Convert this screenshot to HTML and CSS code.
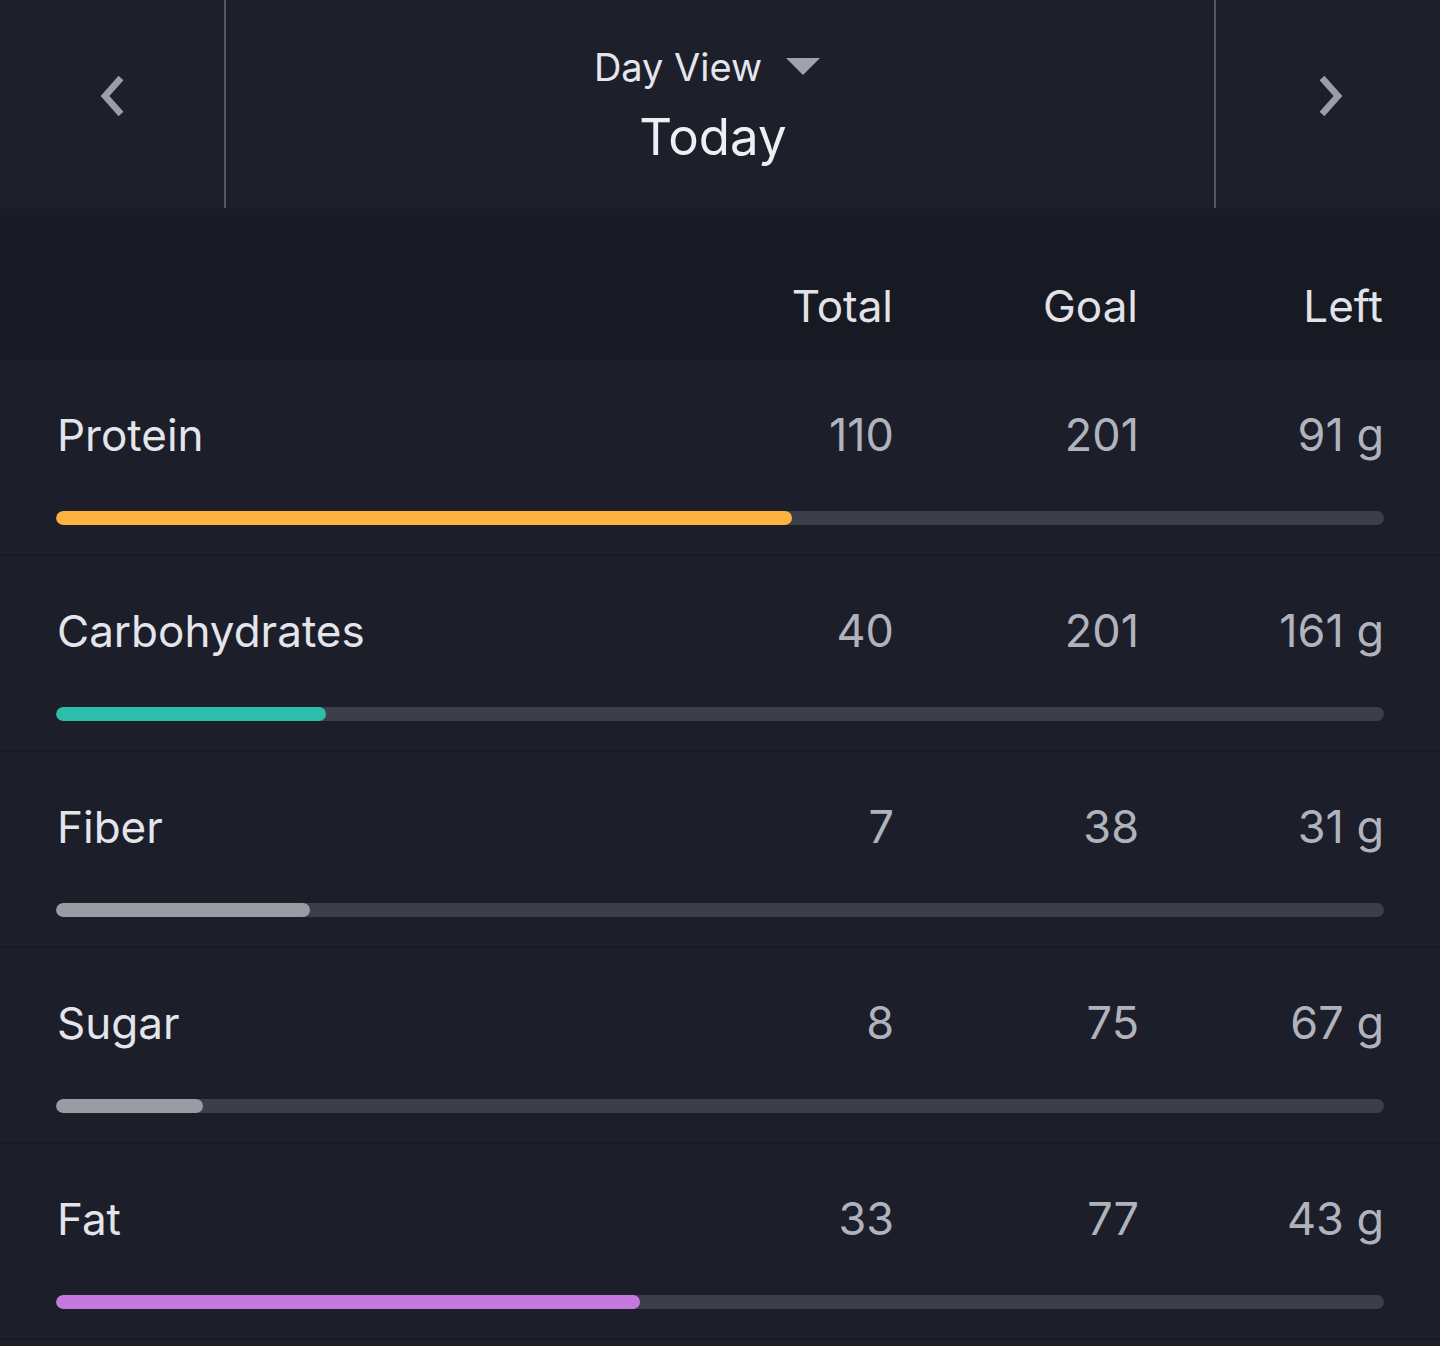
FILE: index.html
```html
<!DOCTYPE html>
<html lang="en">
<head>
<meta charset="utf-8">
<title>Nutrients</title>
<link rel="stylesheet" href="styles.css">
</head>
<body>
<div class="app">
  <header class="topbar">
    <button class="nav nav-prev" aria-label="Previous day">
      <svg width="30" height="46" viewBox="0 0 30 46"><polyline points="24,5 8,23 24,41" fill="none" stroke="#9c9da5" stroke-width="6.5" stroke-linecap="butt" stroke-linejoin="miter"/></svg>
    </button>
    <div class="title">
      <div class="view-select">
        <span>Day View</span>
        <svg class="caret" width="34" height="17" viewBox="0 0 34 17"><polygon points="0,0 34,0 17,17" fill="#a2a3aa"/></svg>
      </div>
      <div class="today">Today</div>
    </div>
    <button class="nav nav-next" aria-label="Next day">
      <svg width="30" height="46" viewBox="0 0 30 46"><polyline points="6,5 22,23 6,41" fill="none" stroke="#9c9da5" stroke-width="6.5" stroke-linecap="butt" stroke-linejoin="miter"/></svg>
    </button>
  </header>

  <div class="colhead">
    <span class="spacer"></span>
    <span class="col">Total</span>
    <span class="col">Goal</span>
    <span class="col">Left</span>
  </div>

  <div class="rows">
    <div class="row">
      <div class="line">
        <span class="name">Protein</span>
        <span class="val">110</span>
        <span class="val">201</span>
        <span class="val">91 g</span>
      </div>
      <div class="track"><div class="fill orange" style="width:736px"></div></div>
    </div>
    <div class="row">
      <div class="line">
        <span class="name">Carbohydrates</span>
        <span class="val">40</span>
        <span class="val">201</span>
        <span class="val">161 g</span>
      </div>
      <div class="track"><div class="fill teal" style="width:270px"></div></div>
    </div>
    <div class="row">
      <div class="line">
        <span class="name">Fiber</span>
        <span class="val">7</span>
        <span class="val">38</span>
        <span class="val">31 g</span>
      </div>
      <div class="track"><div class="fill gray" style="width:254px"></div></div>
    </div>
    <div class="row">
      <div class="line">
        <span class="name">Sugar</span>
        <span class="val">8</span>
        <span class="val">75</span>
        <span class="val">67 g</span>
      </div>
      <div class="track"><div class="fill gray" style="width:147px"></div></div>
    </div>
    <div class="row">
      <div class="line">
        <span class="name">Fat</span>
        <span class="val">33</span>
        <span class="val">77</span>
        <span class="val">43 g</span>
      </div>
      <div class="track"><div class="fill purple" style="width:584px"></div></div>
    </div>
  </div>
</div>
</body>
</html>
```

FILE: styles.css
```css
* { box-sizing: border-box; }
html, body {
  margin: 0;
  padding: 0;
  background: #1c1e2a;
}
body {
  font-family: Inter, "Noto Sans", "Liberation Sans", sans-serif;
  color: #e3e4ea;
}
.app {
  width: 1440px;
  min-height: 1346px;
  background: #1c1e2a;
}
.topbar {
  height: 208px;
  display: grid;
  grid-template-columns: 226px 1fr 226px;
  background: #1d1f2b;
}
.nav {
  background: transparent;
  border: 0;
  padding: 0;
  margin: 0;
  display: flex;
  align-items: center;
  justify-content: center;
  cursor: pointer;
}
.nav-prev {
  border-right: 2px solid #545766;
  padding-right: 0;
  padding-bottom: 16px;
}
.nav-next {
  border-left: 2px solid #545766;
  padding-left: 6px;
  padding-bottom: 16px;
}
.title {
  display: flex;
  flex-direction: column;
  align-items: center;
  padding-top: 44px;
}
.view-select {
  display: flex;
  align-items: center;
  gap: 24px;
  font-size: 38px;
  line-height: 46px;
  color: #e5e6ec;
  margin-left: -26px;
}
.caret { margin-top: -2px; }
.today {
  font-size: 51px;
  line-height: 62px;
  margin-top: 16px;
  color: #eeeff3;
  margin-left: -14px;
}
.colhead {
  height: 152px;
  background: linear-gradient(#1a1c27 0, #171923 16px, #171923 100%);
  display: grid;
  grid-template-columns: 1fr 245px 245px 245px;
  align-items: start;
  padding: 72px 57px 0 57px;
  font-size: 44px;
  line-height: 53px;
  color: #e2e3e9;
}
.col { text-align: right; }
.rows { display: flex; flex-direction: column; }
.row {
  height: 196px;
  padding: 48px 56px 0 56px;
  border-bottom: 2px solid #181a24;
  background: #1c1e2a;
}
.line {
  display: grid;
  grid-template-columns: 1fr 245px 245px 245px;
  font-size: 45px;
  line-height: 54px;
  padding-left: 1px;
}
.name { color: #e4e5eb; font-size: 44px; }
.val { text-align: right; color: #b1b3bc; }
.track {
  margin-top: 49px;
  height: 14px;
  border-radius: 7px;
  background: #3c3f4b;
  overflow: hidden;
}
.fill {
  height: 100%;
  border-radius: 7px;
}
.orange { background: #ffb23f; }
.teal { background: #2dbdab; }
.gray { background: #9b9ca3; }
.purple { background: #c479de; }
```
